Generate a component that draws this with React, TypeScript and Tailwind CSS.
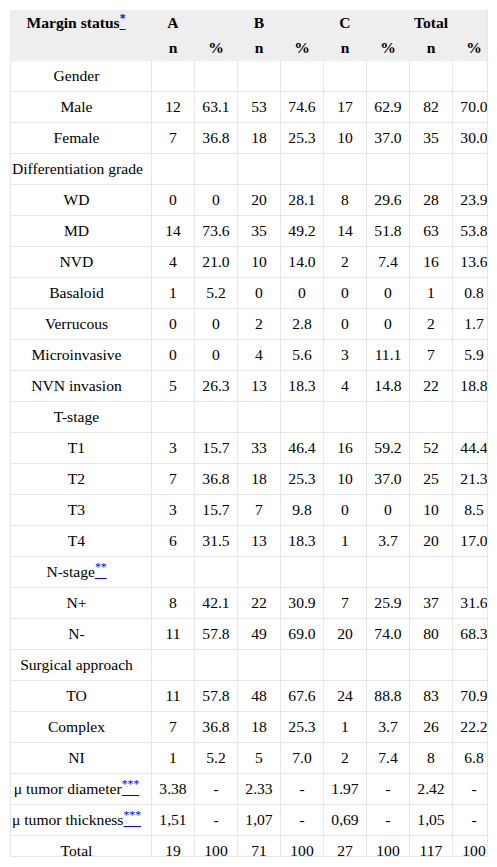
import React from "react";

const Ref = ({ n }: { n: string }) => (
  <a href="#" className="text-[#0000ff] underline">
    <sup>{n}</sup>
  </a>
);

type Row = { label: React.ReactNode; vals?: string[] };

const rows: Row[] = [
  { label: "Gender" },
  { label: "Male", vals: ["12", "63.1", "53", "74.6", "17", "62.9", "82", "70.0"] },
  { label: "Female", vals: ["7", "36.8", "18", "25.3", "10", "37.0", "35", "30.0"] },
  { label: "Differentiation grade" },
  { label: "WD", vals: ["0", "0", "20", "28.1", "8", "29.6", "28", "23.9"] },
  { label: "MD", vals: ["14", "73.6", "35", "49.2", "14", "51.8", "63", "53.8"] },
  { label: "NVD", vals: ["4", "21.0", "10", "14.0", "2", "7.4", "16", "13.6"] },
  { label: "Basaloid", vals: ["1", "5.2", "0", "0", "0", "0", "1", "0.8"] },
  { label: "Verrucous", vals: ["0", "0", "2", "2.8", "0", "0", "2", "1.7"] },
  { label: "Microinvasive", vals: ["0", "0", "4", "5.6", "3", "11.1", "7", "5.9"] },
  { label: "NVN invasion", vals: ["5", "26.3", "13", "18.3", "4", "14.8", "22", "18.8"] },
  { label: "T-stage" },
  { label: "T1", vals: ["3", "15.7", "33", "46.4", "16", "59.2", "52", "44.4"] },
  { label: "T2", vals: ["7", "36.8", "18", "25.3", "10", "37.0", "25", "21.3"] },
  { label: "T3", vals: ["3", "15.7", "7", "9.8", "0", "0", "10", "8.5"] },
  { label: "T4", vals: ["6", "31.5", "13", "18.3", "1", "3.7", "20", "17.0"] },
  { label: <>N-stage<Ref n="**" /></> },
  { label: "N+", vals: ["8", "42.1", "22", "30.9", "7", "25.9", "37", "31.6"] },
  { label: "N-", vals: ["11", "57.8", "49", "69.0", "20", "74.0", "80", "68.3"] },
  { label: "Surgical approach" },
  { label: "TO", vals: ["11", "57.8", "48", "67.6", "24", "88.8", "83", "70.9"] },
  { label: "Complex", vals: ["7", "36.8", "18", "25.3", "1", "3.7", "26", "22.2"] },
  { label: "NI", vals: ["1", "5.2", "5", "7.0", "2", "7.4", "8", "6.8"] },
  { label: <>μ tumor diameter<Ref n="***" /></>, vals: ["3.38", "-", "2.33", "-", "1.97", "-", "2.42", "-"] },
  { label: <>μ tumor thickness<Ref n="***" /></>, vals: ["1,51", "-", "1,07", "-", "0,69", "-", "1,05", "-"] },
  { label: "Total", vals: ["19", "100", "71", "100", "27", "100", "117", "100"] },
];

const th = "border border-[#eeeeee] bg-[#eeeeee] py-[3px] px-0 text-center font-bold leading-[18px] whitespace-nowrap";
const td = "border border-[#e6e6e6] py-[6px] px-0 text-center leading-[18px] whitespace-nowrap";

export default function App() {
  return (
    <div className="w-[497px] h-[867px] bg-white text-black text-[15.6px] font-['Liberation_Serif','Times_New_Roman',serif]">
      <div className="h-[10px]" />
      <div className="ml-[10px] w-[478px] h-[847px] overflow-hidden border-r border-b border-[#e6e6e6]">
        <table className="table-fixed border-collapse w-[485px]">
          <colgroup>
            <col className="w-[141px]" />
            <col className="w-[43px]" />
            <col className="w-[43px]" />
            <col className="w-[43px]" />
            <col className="w-[43px]" />
            <col className="w-[43px]" />
            <col className="w-[43px]" />
            <col className="w-[43px]" />
            <col className="w-[43px]" />
          </colgroup>
          <thead>
            <tr>
              <th className={th + " pr-[10px]"}>
                Margin status<Ref n="*" />
              </th>
              <th className={th}>A</th>
              <th className={th}></th>
              <th className={th}>B</th>
              <th className={th}></th>
              <th className={th}>C</th>
              <th className={th}></th>
              <th className={th}>Total</th>
              <th className={th}></th>
            </tr>
            <tr>
              <th className={th}></th>
              <th className={th}>n</th>
              <th className={th}>%</th>
              <th className={th}>n</th>
              <th className={th}>%</th>
              <th className={th}>n</th>
              <th className={th}>%</th>
              <th className={th}>n</th>
              <th className={th}>%</th>
            </tr>
          </thead>
          <tbody>
            {rows.map((r, i) => (
              <tr key={i}>
                <td className={td + " pl-[1px] pr-[10px]"}>{r.label}</td>
                {Array.from({ length: 8 }).map((_, j) => (
                  <td key={j} className={td}>
                    {r.vals ? r.vals[j] : ""}
                  </td>
                ))}
              </tr>
            ))}
          </tbody>
        </table>
      </div>
    </div>
  );
}
